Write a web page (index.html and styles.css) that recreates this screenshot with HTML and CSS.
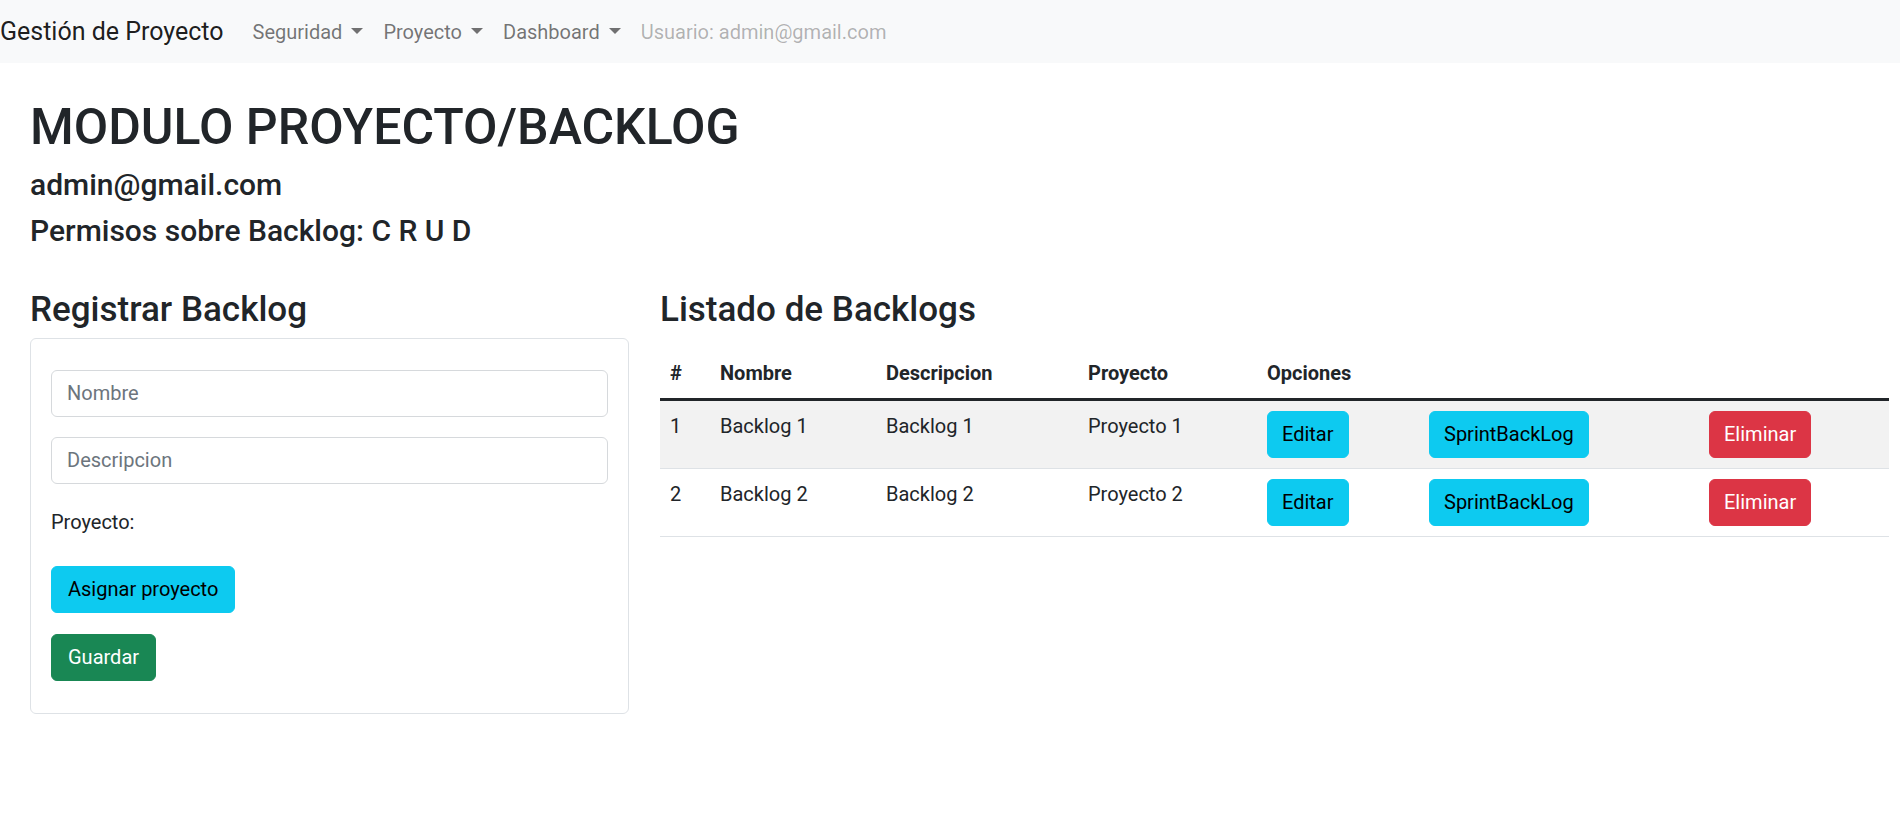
FILE: index.html
```html
<!DOCTYPE html>
<html lang="es">
<head>
<meta charset="utf-8">
<title>Gestión de Proyecto</title>
<link rel="stylesheet" href="styles.css">
</head>
<body>
<nav class="navbar">
  <a class="brand" href="#">Gestión de Proyecto</a>
  <ul class="nav">
    <li class="nav-link dropdown">Seguridad</li>
    <li class="nav-link dropdown">Proyecto</li>
    <li class="nav-link dropdown">Dashboard</li>
    <li class="nav-link disabled">Usuario: admin@gmail.com</li>
  </ul>
</nav>
<main class="container">
  <h1 class="title">MODULO PROYECTO/BACKLOG</h1>
  <h4 class="sub">admin@gmail.com</h4>
  <h4 class="sub">Permisos sobre Backlog: C R U D</h4>
  <div class="row">
    <section class="col-form">
      <h3 class="section-title">Registrar Backlog</h3>
      <div class="card">
        <input class="form-control" type="text" placeholder="Nombre">
        <input class="form-control" type="text" placeholder="Descripcion">
        <label class="form-label">Proyecto:</label>
        <div class="btn-row"><button class="btn btn-info">Asignar proyecto</button></div>
        <div class="btn-row"><button class="btn btn-success">Guardar</button></div>
      </div>
    </section>
    <section class="col-list">
      <h3 class="section-title">Listado de Backlogs</h3>
      <table class="table">
        <colgroup>
          <col class="c-num"><col class="c-name"><col class="c-desc"><col class="c-proj"><col class="c-edit"><col class="c-sprint"><col class="c-del">
        </colgroup>
        <thead>
          <tr><th>#</th><th>Nombre</th><th>Descripcion</th><th>Proyecto</th><th>Opciones</th><th></th><th></th></tr>
        </thead>
        <tbody>
          <tr class="striped">
            <td>1</td><td>Backlog 1</td><td>Backlog 1</td><td>Proyecto 1</td>
            <td><button class="btn btn-info btn-sm-x">Editar</button></td>
            <td><button class="btn btn-info btn-sm-x">SprintBackLog</button></td>
            <td><button class="btn btn-danger btn-sm-x">Eliminar</button></td>
          </tr>
          <tr>
            <td>2</td><td>Backlog 2</td><td>Backlog 2</td><td>Proyecto 2</td>
            <td><button class="btn btn-info btn-sm-x">Editar</button></td>
            <td><button class="btn btn-info btn-sm-x">SprintBackLog</button></td>
            <td><button class="btn btn-danger btn-sm-x">Eliminar</button></td>
          </tr>
        </tbody>
      </table>
    </section>
  </div>
</main>
</body>
</html>
```
FILE: styles.css
```css
* { box-sizing: border-box; }
html, body { margin: 0; padding: 0; }
body {
  font-family: Roboto, "Liberation Sans", sans-serif;
  font-size: 20px;
  line-height: 1.5;
  color: #212529;
  background: #fff;
}
.navbar {
  height: 63px;
  background: #f8f9fa;
  display: flex;
  align-items: center;
}
.brand {
  font-size: 25px;
  line-height: 37px;
  color: rgba(0,0,0,.9);
  text-decoration: none;
  margin-right: 19px;
}
.nav {
  list-style: none;
  margin: 0;
  padding: 0;
  display: flex;
}
.nav-link {
  padding: 10px 10px;
  color: rgba(0,0,0,.55);
  line-height: 30px;
}
.nav-link.disabled { color: rgba(0,0,0,.3); }
.dropdown::after {
  content: "";
  display: inline-block;
  margin-left: 9px;
  vertical-align: 5px;
  border-top: 6px solid;
  border-left: 6px solid transparent;
  border-right: 6px solid transparent;
}
.container {
  padding: 34px 11px 0 30px;
}
.title {
  font-size: 50px;
  font-weight: 500;
  line-height: 60px;
  margin: 0 0 10px;
}
.sub {
  font-size: 30px;
  font-weight: 500;
  line-height: 36px;
  margin: 0 0 10px;
}
.row {
  display: grid;
  grid-template-columns: 599px 1fr;
  column-gap: 31px;
  margin-top: 40px;
}
.section-title {
  font-size: 35px;
  font-weight: 500;
  line-height: 42px;
  margin: 0 0 7px;
}
.card {
  border: 1px solid #dee2e6;
  border-radius: 6px;
  padding: 31px 20px 32px;
  display: flex;
  flex-direction: column;
  align-items: flex-start;
}
.form-control {
  width: 100%;
  display: block;
  font: inherit;
  font-size: 20px;
  line-height: 30px;
  padding: 7px 15px 8px;
  border: 1px solid #d6d9dc;
  border-radius: 6px;
  color: #212529;
  margin: 0 0 20px;
  background: #fff;
}
.form-control::placeholder { color: #6c757d; }
.form-label {
  display: block;
  line-height: 30px;
  margin: 3px 0 29px;
}
.btn-row { margin-bottom: 21px; }
.btn-row:last-child { margin-bottom: 0; }
.btn {
  font: inherit;
  font-size: 20px;
  line-height: 30px;
  padding: 7px 16px 8px;
  border: 1px solid transparent;
  border-radius: 6px;
  cursor: pointer;
}
.btn-sm-x { padding-left: 14px; padding-right: 14px; }
.btn-info { background: #0dcaf0; border-color: #0dcaf0; color: #000; }
.btn-success { background: #198754; border-color: #198754; color: #fff; }
.btn-danger { background: #dc3545; border-color: #dc3545; color: #fff; }
.table {
  width: 100%;
  border-collapse: collapse;
  table-layout: fixed;
  margin-top: 17px;
}
.c-num { width: 50px; }
.c-name { width: 166px; }
.c-desc { width: 202px; }
.c-proj { width: 179px; }
.c-edit { width: 162px; }
.c-sprint { width: 280px; }
.c-del { width: 190px; }
.table th, .table td {
  text-align: left;
  padding: 10px 10px;
  vertical-align: top;
  border-bottom: 1px solid #dee2e6;
}
.table th {
  font-weight: 700;
  vertical-align: bottom;
  border-bottom: 3px solid #212529;
}
.table tr.striped td { background: #f2f2f2; }
```
